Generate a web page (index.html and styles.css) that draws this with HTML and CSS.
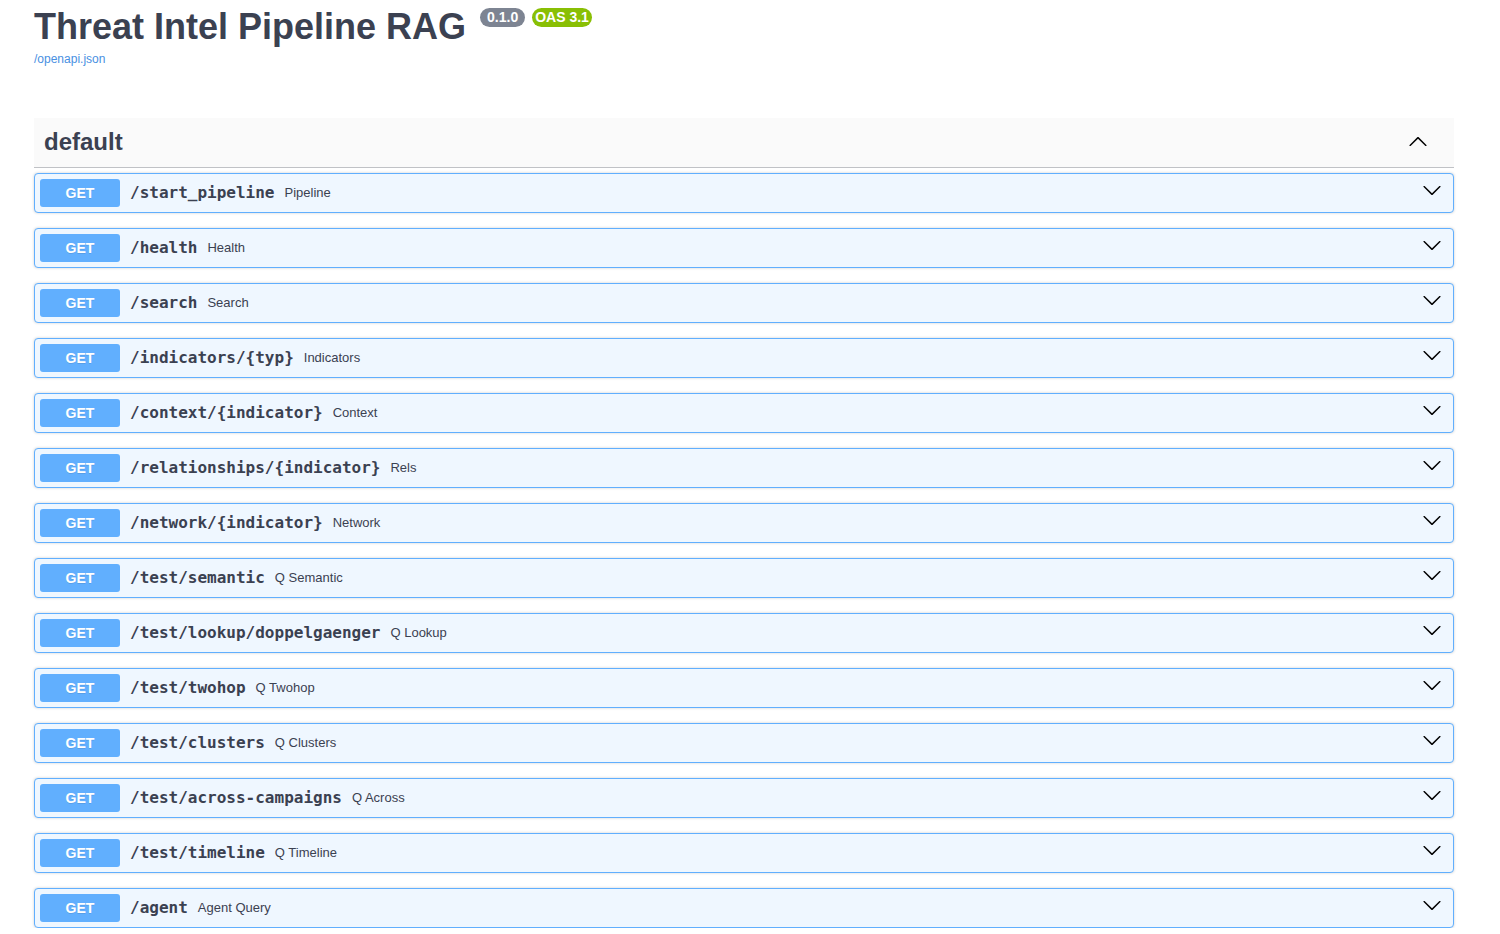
FILE: index.html
```html
<!DOCTYPE html>
<html>
<head>
<meta charset="utf-8">
<link rel="stylesheet" href="styles.css">
</head>
<body>
<div class="wrapper">
  <div class="info">
    <h2 class="title">Threat Intel Pipeline RAG <span class="badge version">0.1.0</span><span class="badge oas">OAS 3.1</span></h2>
    <a class="spec-link" href="#">/openapi.json</a>
  </div>

  <div class="tag-section">
    <div class="tag-header">
      <span class="tag-name">default</span>
      <svg class="arrow" width="20" height="20" viewBox="0 0 20 20"><path d="M17.418 14.908c.272.268.709.268.979 0s.271-.701 0-.969l-7.908-7.83c-.27-.268-.707-.268-.979 0l-7.908 7.83c-.27.268-.27.701 0 .969.271.268.709.268.979 0L10 7.767l7.418 7.141z"/></svg>
    </div>

    <div class="ops">
      <div class="op"><span class="method">GET</span><span class="path">/start_pipeline</span><span class="desc">Pipeline</span><svg class="chev" width="20" height="20" viewBox="0 0 20 20"><path d="M17.418 6.109c.272-.268.709-.268.979 0s.271.701 0 .969l-7.908 7.83c-.27.268-.707.268-.979 0l-7.908-7.83c-.27-.268-.27-.701 0-.969.271-.268.709-.268.979 0L10 13.25l7.418-7.141z"/></svg></div>
      <div class="op"><span class="method">GET</span><span class="path">/health</span><span class="desc">Health</span><svg class="chev" width="20" height="20" viewBox="0 0 20 20"><path d="M17.418 6.109c.272-.268.709-.268.979 0s.271.701 0 .969l-7.908 7.83c-.27.268-.707.268-.979 0l-7.908-7.83c-.27-.268-.27-.701 0-.969.271-.268.709-.268.979 0L10 13.25l7.418-7.141z"/></svg></div>
      <div class="op"><span class="method">GET</span><span class="path">/search</span><span class="desc">Search</span><svg class="chev" width="20" height="20" viewBox="0 0 20 20"><path d="M17.418 6.109c.272-.268.709-.268.979 0s.271.701 0 .969l-7.908 7.83c-.27.268-.707.268-.979 0l-7.908-7.83c-.27-.268-.27-.701 0-.969.271-.268.709-.268.979 0L10 13.25l7.418-7.141z"/></svg></div>
      <div class="op"><span class="method">GET</span><span class="path">/indicators/{typ}</span><span class="desc">Indicators</span><svg class="chev" width="20" height="20" viewBox="0 0 20 20"><path d="M17.418 6.109c.272-.268.709-.268.979 0s.271.701 0 .969l-7.908 7.83c-.27.268-.707.268-.979 0l-7.908-7.83c-.27-.268-.27-.701 0-.969.271-.268.709-.268.979 0L10 13.25l7.418-7.141z"/></svg></div>
      <div class="op"><span class="method">GET</span><span class="path">/context/{indicator}</span><span class="desc">Context</span><svg class="chev" width="20" height="20" viewBox="0 0 20 20"><path d="M17.418 6.109c.272-.268.709-.268.979 0s.271.701 0 .969l-7.908 7.83c-.27.268-.707.268-.979 0l-7.908-7.83c-.27-.268-.27-.701 0-.969.271-.268.709-.268.979 0L10 13.25l7.418-7.141z"/></svg></div>
      <div class="op"><span class="method">GET</span><span class="path">/relationships/{indicator}</span><span class="desc">Rels</span><svg class="chev" width="20" height="20" viewBox="0 0 20 20"><path d="M17.418 6.109c.272-.268.709-.268.979 0s.271.701 0 .969l-7.908 7.83c-.27.268-.707.268-.979 0l-7.908-7.83c-.27-.268-.27-.701 0-.969.271-.268.709-.268.979 0L10 13.25l7.418-7.141z"/></svg></div>
      <div class="op"><span class="method">GET</span><span class="path">/network/{indicator}</span><span class="desc">Network</span><svg class="chev" width="20" height="20" viewBox="0 0 20 20"><path d="M17.418 6.109c.272-.268.709-.268.979 0s.271.701 0 .969l-7.908 7.83c-.27.268-.707.268-.979 0l-7.908-7.83c-.27-.268-.27-.701 0-.969.271-.268.709-.268.979 0L10 13.25l7.418-7.141z"/></svg></div>
      <div class="op"><span class="method">GET</span><span class="path">/test/semantic</span><span class="desc">Q Semantic</span><svg class="chev" width="20" height="20" viewBox="0 0 20 20"><path d="M17.418 6.109c.272-.268.709-.268.979 0s.271.701 0 .969l-7.908 7.83c-.27.268-.707.268-.979 0l-7.908-7.83c-.27-.268-.27-.701 0-.969.271-.268.709-.268.979 0L10 13.25l7.418-7.141z"/></svg></div>
      <div class="op"><span class="method">GET</span><span class="path">/test/lookup/doppelgaenger</span><span class="desc">Q Lookup</span><svg class="chev" width="20" height="20" viewBox="0 0 20 20"><path d="M17.418 6.109c.272-.268.709-.268.979 0s.271.701 0 .969l-7.908 7.83c-.27.268-.707.268-.979 0l-7.908-7.83c-.27-.268-.27-.701 0-.969.271-.268.709-.268.979 0L10 13.25l7.418-7.141z"/></svg></div>
      <div class="op"><span class="method">GET</span><span class="path">/test/twohop</span><span class="desc">Q Twohop</span><svg class="chev" width="20" height="20" viewBox="0 0 20 20"><path d="M17.418 6.109c.272-.268.709-.268.979 0s.271.701 0 .969l-7.908 7.83c-.27.268-.707.268-.979 0l-7.908-7.83c-.27-.268-.27-.701 0-.969.271-.268.709-.268.979 0L10 13.25l7.418-7.141z"/></svg></div>
      <div class="op"><span class="method">GET</span><span class="path">/test/clusters</span><span class="desc">Q Clusters</span><svg class="chev" width="20" height="20" viewBox="0 0 20 20"><path d="M17.418 6.109c.272-.268.709-.268.979 0s.271.701 0 .969l-7.908 7.83c-.27.268-.707.268-.979 0l-7.908-7.83c-.27-.268-.27-.701 0-.969.271-.268.709-.268.979 0L10 13.25l7.418-7.141z"/></svg></div>
      <div class="op"><span class="method">GET</span><span class="path">/test/across-campaigns</span><span class="desc">Q Across</span><svg class="chev" width="20" height="20" viewBox="0 0 20 20"><path d="M17.418 6.109c.272-.268.709-.268.979 0s.271.701 0 .969l-7.908 7.83c-.27.268-.707.268-.979 0l-7.908-7.83c-.27-.268-.27-.701 0-.969.271-.268.709-.268.979 0L10 13.25l7.418-7.141z"/></svg></div>
      <div class="op"><span class="method">GET</span><span class="path">/test/timeline</span><span class="desc">Q Timeline</span><svg class="chev" width="20" height="20" viewBox="0 0 20 20"><path d="M17.418 6.109c.272-.268.709-.268.979 0s.271.701 0 .969l-7.908 7.83c-.27.268-.707.268-.979 0l-7.908-7.83c-.27-.268-.27-.701 0-.969.271-.268.709-.268.979 0L10 13.25l7.418-7.141z"/></svg></div>
      <div class="op"><span class="method">GET</span><span class="path">/agent</span><span class="desc">Agent Query</span><svg class="chev" width="20" height="20" viewBox="0 0 20 20"><path d="M17.418 6.109c.272-.268.709-.268.979 0s.271.701 0 .969l-7.908 7.83c-.27.268-.707.268-.979 0l-7.908-7.83c-.27-.268-.27-.701 0-.969.271-.268.709-.268.979 0L10 13.25l7.418-7.141z"/></svg></div>
    </div>
  </div>
</div>
</body>
</html>
```

FILE: styles.css
```css
html, body {
  margin: 0;
  padding: 0;
  background: #fff;
}

body {
  font-family: "Liberation Sans", Arial, sans-serif;
  color: #3b4151;
}

.wrapper {
  width: 1420px;
  margin: 0 0 0 34px;
}

.info {
  padding-top: 6px;
}

.title {
  margin: 0;
  font-size: 36px;
  font-weight: 700;
  line-height: 41px;
  color: #3b4151;
  white-space: nowrap;
}

.badge {
  display: inline-block;
  vertical-align: top;
  margin: 2px 0 0 0;
  padding: 1px 7px;
  border-radius: 57px;
  color: #fff;
  font-size: 14px;
  line-height: 17px;
  font-weight: 700;
}

.version {
  background: #7d8492;
  margin-left: 4px;
}

.oas {
  background: #89bf04;
  margin-left: 7px;
  padding: 1px 3px;
}

.spec-link {
  display: block;
  margin-top: 5px;
  font-size: 12px;
  line-height: 14px;
  color: #4990e2;
  text-decoration: none;
}

.tag-section {
  margin-top: 52px;
}

.tag-header {
  display: flex;
  align-items: center;
  justify-content: space-between;
  height: 49px;
  padding: 0 26px 0 10px;
  background: #fafafa;
  border-bottom: 1px solid rgba(59, 65, 81, 0.3);
}

.tag-name {
  font-size: 24px;
  font-weight: 700;
  color: #3b4151;
  margin-top: -2px;
}

.arrow, .chev {
  fill: #000;
  flex: none;
}

.arrow {
  margin-top: -3px;
}

.ops {
  display: flex;
  flex-direction: column;
  gap: 15px;
  padding-top: 5px;
}

.op {
  display: flex;
  align-items: center;
  height: 38px;
  border: 1px solid #61affe;
  border-radius: 4px;
  background: #eff7ff;
  box-shadow: 0 0 3px rgba(0, 0, 0, 0.19);
  padding: 0 11px 0 5px;
}

.method {
  flex: none;
  width: 80px;
  height: 28px;
  line-height: 28px;
  text-align: center;
  background: #61affe;
  color: #fff;
  border-radius: 3px;
  font-size: 14px;
  font-weight: 700;
  text-shadow: 0 1px 0 rgba(0, 0, 0, 0.1);
}

.path {
  font-family: "DejaVu Sans Mono", monospace;
  font-size: 16px;
  font-weight: 700;
  color: #3b4151;
  padding: 0 10px;
  margin-bottom: 2px;
}

.desc {
  flex: 1 1 auto;
  font-size: 13px;
  color: #3b4151;
  margin-bottom: 2px;
}

.chev {
  margin-top: -6px;
}
```
